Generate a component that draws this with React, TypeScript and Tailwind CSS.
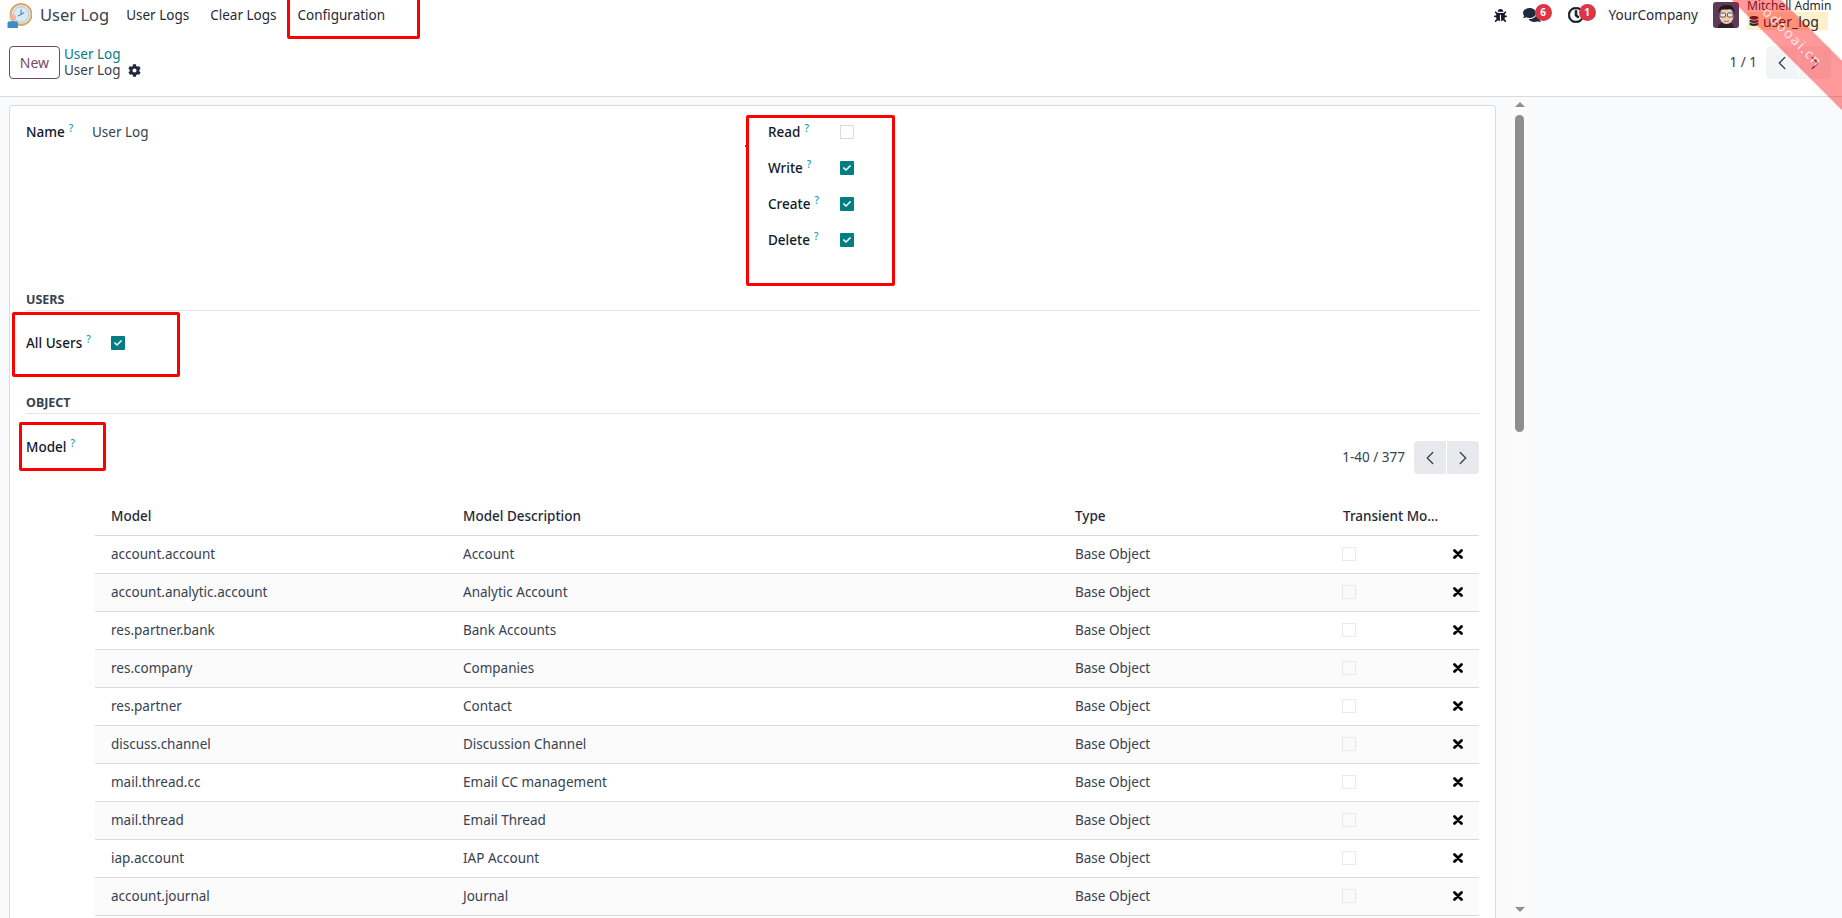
import { ChevronLeft, ChevronRight } from "lucide-react";
import { FaBug, FaCheck, FaCog, FaComments, FaDatabase, FaRegClock } from "react-icons/fa";

const rows = [
  ["account.account", "Account"],
  ["account.analytic.account", "Analytic Account"],
  ["res.partner.bank", "Bank Accounts"],
  ["res.company", "Companies"],
  ["res.partner", "Contact"],
  ["discuss.channel", "Discussion Channel"],
  ["mail.thread.cc", "Email CC management"],
  ["mail.thread", "Email Thread"],
  ["iap.account", "IAP Account"],
  ["account.journal", "Journal"],
];

function Help() {
  return <sup className="ml-[4px] text-[10px] font-medium leading-none text-[#1a9cb5]">?</sup>;
}

function Check({ on }: { on?: boolean }) {
  if (on) {
    return (
      <span className="flex h-[14px] w-[14px] items-center justify-center rounded-[1px] bg-[#017e84] text-white">
        <FaCheck className="h-[8px] w-[8px]" />
      </span>
    );
  }
  return <span className="block h-[14px] w-[14px] border border-[#d8dadd] bg-white" />;
}

function Field({ label, on }: { label: string; on?: boolean }) {
  return (
    <div className="flex h-[36px] items-center">
      <span className="w-[72px] font-medium text-[#111827]">
        {label}
        <Help />
      </span>
      <Check on={on} />
    </div>
  );
}

function SectionTitle({ children }: { children: string }) {
  return (
    <div className="h-[21px] border-b border-[#e3e5e8] text-[12.5px] font-bold uppercase leading-[20px] text-[#374151]">
      {children}
    </div>
  );
}

function Logo() {
  return (
    <svg viewBox="0 0 24 24" className="h-[25px] w-[25px]">
      <circle cx="13.5" cy="11" r="10" fill="#f6f1e8" stroke="#d9a868" strokeWidth="2" />
      <circle cx="13.5" cy="11" r="7.5" fill="#d7eaf6" stroke="#7fa9c6" strokeWidth="0.6" />
      <path d="M13.5 6v5l-3 1.5M13.5 11l3-2" fill="none" stroke="#4f86ad" strokeWidth="1" />
      <circle cx="5.5" cy="14" r="3" fill="#eeb49b" />
      <path d="M0.5 24v-4.500q0-2 2-2h6q2 0 2 2v4.500z" fill="#3a8cc4" />
    </svg>
  );
}

function Avatar() {
  return (
    <svg viewBox="0 0 26 26" className="h-[26px] w-[26px] rounded-[3px]">
      <rect width="26" height="26" fill="#5c3a58" />
      <path d="M5 26q0-6 8-6t8 6z" fill="#2f2230" />
      <ellipse cx="13.500" cy="14" rx="7" ry="8" fill="#f3cdb0" />
      <path d="M5.500 12q-1-9 8-9t8 9q-1-5-4-5-5 1-9 0-2 1-3 5z" fill="#1d1a1c" />
      <rect x="7" y="11" width="5.500" height="4" rx="1" fill="#e8e8e8" stroke="#3a3a3a" strokeWidth="0.8" />
      <rect x="14.500" y="11" width="5.500" height="4" rx="1" fill="#e8e8e8" stroke="#3a3a3a" strokeWidth="0.8" />
      <path d="M11 19q2.500 1 5 0" fill="none" stroke="#8c4a3a" strokeWidth="0.8" />
    </svg>
  );
}

function Badge({ n }: { n: number }) {
  return (
    <span className="absolute left-[12px] top-[-1px] flex h-[17px] w-[17px] items-center justify-center rounded-full bg-[#dc3545] text-[10px] font-bold text-white">
      {n}
    </span>
  );
}

function RemoveIcon() {
  return (
    <svg viewBox="0 0 10 10" className="ml-[13px] h-[10px] w-[10px]">
      <path d="M1.500 1.500l7 7M8.500 1.500l-7 7" stroke="#000" strokeWidth="2.800" strokeLinecap="round" />
    </svg>
  );
}

function Pager({ label, dark }: { label: string; dark?: boolean }) {
  const bg = dark ? "bg-[#e7e9ed]" : "bg-[#f3f4f6]";
  return (
    <div className="flex items-center">
      <span className="mr-[9px] text-[#374151]">{label}</span>
      <div className="flex h-[33px] w-[65px] gap-px">
        <span className={`flex flex-1 items-center justify-center rounded-l-[4px] ${bg}`}>
          <ChevronLeft className="h-[22px] w-[22px] text-[#374151]" strokeWidth={1.4} />
        </span>
        <span className={`flex flex-1 items-center justify-center rounded-r-[4px] ${bg}`}>
          <ChevronRight className="h-[22px] w-[22px] text-[#374151]" strokeWidth={1.4} />
        </span>
      </div>
    </div>
  );
}

export default function App() {
  return (
    <div
      className="relative h-[918px] w-[1842px] overflow-hidden bg-white text-[13.5px] text-[#374151]"
      style={{ fontFamily: '"Noto Sans", sans-serif' }}
    >
      {/* top nav */}
      <nav className="flex h-[30px] items-center pl-[7px] text-[#1f2937]">
        <Logo />
        <span className="ml-[8px] text-[16.5px] text-[#374151]">User Log</span>
        <span className="ml-[17px]">User Logs</span>
        <span className="ml-[21px]">Clear Logs</span>
        <span className="ml-[21px]">Configuration</span>
        <div className="ml-auto flex items-center pr-[14px]">
          <FaBug className="h-[13px] w-[13px] text-[#111827]" />
          <span className="relative ml-[16px] flex h-[20px] w-[20px] items-center">
            <FaComments className="h-[18px] w-[18px] text-[#1f2937]" />
            <span className="absolute left-[0px] top-0">
              <Badge n={6} />
            </span>
          </span>
          <span className="relative ml-[25px] flex h-[20px] w-[20px] items-center">
            <FaRegClock className="h-[16px] w-[16px] text-[#111827]" stroke="currentColor" strokeWidth={24} />
            <span className="absolute left-[-1px] top-0">
              <Badge n={1} />
            </span>
          </span>
          <span className="ml-[21px]">YourCompany</span>
          <span className="ml-[15px]">
            <Avatar />
          </span>
          <div className="ml-[8px] flex w-[81px] flex-col">
            <span className="h-[12px] whitespace-nowrap text-[12px] leading-[12px]">Mitchell Admin</span>
            <span className="flex h-[18px] items-center bg-[#fdf0cb] pl-[2px] text-[14px] text-[#1f2937]">
              <FaDatabase className="mr-[4px] h-[10px] w-[10px]" />
              user_log
            </span>
          </div>
        </div>
      </nav>

      {/* control panel */}
      <div className="flex items-start border-b border-[#d8dadd] pb-[17px] pl-[9px] pr-[11px] pt-[16px]">
        <button className="h-[33px] w-[51px] rounded-[4px] border border-[#714b67] text-[14px] text-[#714b67]">New</button>
        <div className="ml-[4px] flex flex-col leading-[16px]">
          <span className="text-[#017e84]">User Log</span>
          <span className="flex items-center">
            User Log
            <FaCog className="ml-[7px] h-[13px] w-[13px] text-[#1f2937]" />
          </span>
        </div>
        <div className="ml-auto">
          <Pager label="1 / 1" />
        </div>
      </div>

      {/* body */}
      <div className="flex h-[821px] bg-[#f9fafb]">
        <div className="w-[1496px] pl-[9px] pt-[8px]">
          <div className="h-[900px] rounded-t-[4px] border border-b-0 border-[#d8dadd] bg-white px-[16px] pt-[8px]">
            <div className="flex h-[144px]">
              <div className="flex h-[36px] w-[742px] items-center">
                <span className="w-[66px] font-medium text-[#111827]">
                  Name
                  <Help />
                </span>
                <span>User Log</span>
              </div>
              <div>
                <Field label="Read" />
                <Field label="Write" on />
                <Field label="Create" on />
                <Field label="Delete" on />
              </div>
            </div>

            <div className="mt-[32px]">
              <SectionTitle>Users</SectionTitle>
            </div>
            <div className="mt-[14px] flex h-[36px] items-center">
              <span className="w-[85px] font-medium text-[#111827]">
                All Users
                <Help />
              </span>
              <Check on />
            </div>

            <div className="mt-[32px]">
              <SectionTitle>Object</SectionTitle>
            </div>
            <div className="flex h-[83px] items-start justify-between">
              <span className="pt-[23px] font-medium text-[#111827]">
                Model
                <Help />
              </span>
              <div className="pt-[27px]">
                <Pager label="1-40 / 377" dark />
              </div>
            </div>

            <table className="ml-[69px] w-[1384px] table-fixed border-collapse">
              <colgroup>
                <col className="w-[352px]" />
                <col className="w-[612px]" />
                <col className="w-[268px]" />
                <col className="w-[113px]" />
                <col className="w-[39px]" />
              </colgroup>
              <thead>
                <tr className="h-[38px] border-b border-[#d8dadd] text-left text-[#1f2937]">
                  <th className="pl-[16px] font-medium">Model</th>
                  <th className="pl-[16px] font-medium">Model Description</th>
                  <th className="pl-[16px] font-medium">Type</th>
                  <th className="truncate pl-[16px] font-medium">Transient Model</th>
                  <th />
                </tr>
              </thead>
              <tbody>
                {rows.map(([model, desc], i) => (
                  <tr key={model} className={`h-[38px] border-b border-[#d8dadd] ${i % 2 ? "bg-[#fbfbfb]" : "bg-white"}`}>
                    <td className="pl-[16px]">{model}</td>
                    <td className="pl-[16px]">{desc}</td>
                    <td className="pl-[16px]">Base Object</td>
                    <td className="pl-[15px]">
                      <span className="block h-[14px] w-[14px] border border-[#e7e9ed]" />
                    </td>
                    <td>
                      <RemoveIcon />
                    </td>
                  </tr>
                ))}
              </tbody>
            </table>
          </div>
        </div>

        {/* page scrollbar */}
        <div className="ml-[16px] flex w-[15px] flex-col items-center bg-[#fbfbfb] pt-[5px]">
          <span className="h-0 w-0 border-x-[5px] border-b-[5px] border-x-transparent border-b-[#8e8e8e]" />
          <span className="mt-[8px] h-[317px] w-[9px] rounded-[5px] bg-[#8e8e8e]" />
          <span className="mt-[475px] h-0 w-0 border-x-[5px] border-t-[5px] border-x-transparent border-t-[#8e8e8e]" />
        </div>
      </div>

      {/* red annotation boxes */}
      <div className="absolute left-[287px] top-[-4px] h-[43px] w-[133px] rounded-[2px] border-[3px] border-[#ff0000]" />
      <div className="absolute left-[746px] top-[115px] h-[171px] w-[149px] rounded-[2px] border-[3px] border-[#ff0000]" />
      <div className="absolute left-[745px] top-[145px] h-[2px] w-[3px] bg-[#ff0000]" />
      <div className="absolute left-[12px] top-[312px] h-[65px] w-[168px] rounded-[2px] border-[3px] border-[#ff0000]" />
      <div className="absolute left-[19px] top-[422px] h-[49px] w-[87px] rounded-[2px] border-[3px] border-[#ff0000]" />

      {/* watermark ribbon */}
      <div className="absolute left-[1593px] top-[19px] flex h-[35px] w-[400px] rotate-45 items-center justify-center bg-[#ff0000]/40 text-[14px] tracking-[1.5px] text-white/75">
        odooai.cn
      </div>
    </div>
  );
}
